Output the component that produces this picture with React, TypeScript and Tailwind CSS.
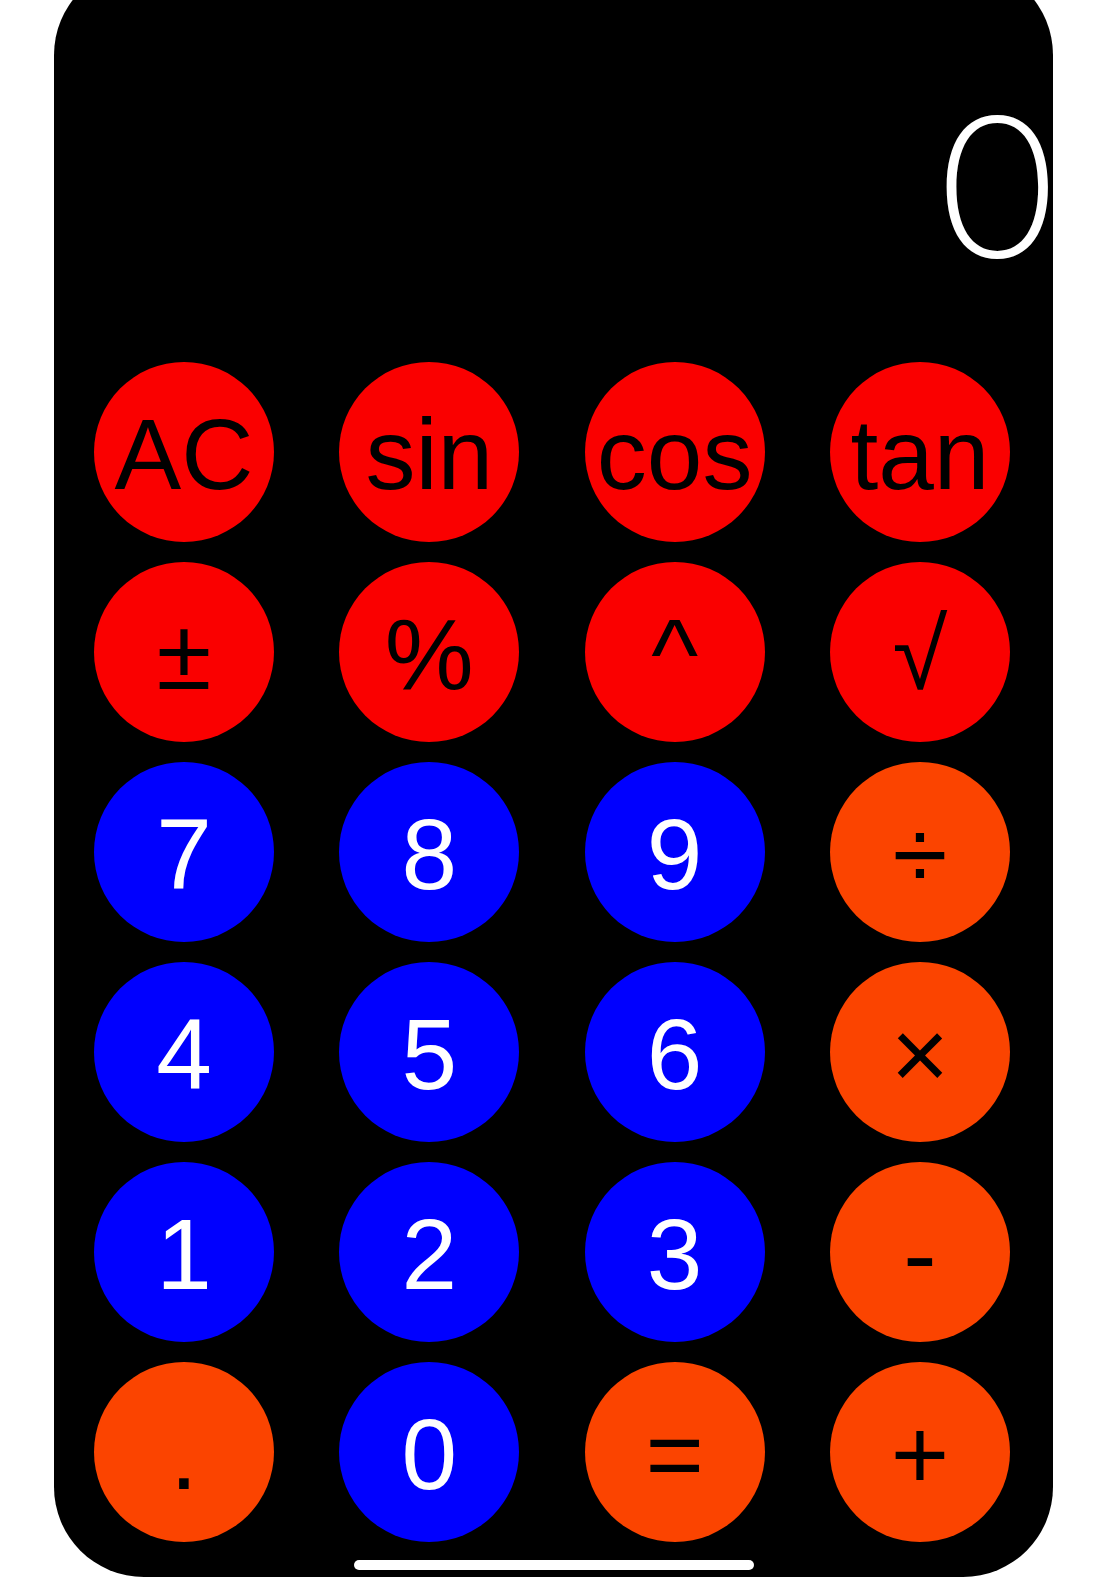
import React from 'react';

type Key = { label: string; kind: 'fn' | 'num' | 'op' };

const rows: Key[][] = [
  [
    { label: 'AC', kind: 'fn' },
    { label: 'sin', kind: 'fn' },
    { label: 'cos', kind: 'fn' },
    { label: 'tan', kind: 'fn' },
  ],
  [
    { label: '±', kind: 'fn' },
    { label: '%', kind: 'fn' },
    { label: '^', kind: 'fn' },
    { label: '√', kind: 'fn' },
  ],
  [
    { label: '7', kind: 'num' },
    { label: '8', kind: 'num' },
    { label: '9', kind: 'num' },
    { label: '÷', kind: 'op' },
  ],
  [
    { label: '4', kind: 'num' },
    { label: '5', kind: 'num' },
    { label: '6', kind: 'num' },
    { label: '×', kind: 'op' },
  ],
  [
    { label: '1', kind: 'num' },
    { label: '2', kind: 'num' },
    { label: '3', kind: 'num' },
    { label: '-', kind: 'op' },
  ],
  [
    { label: '.', kind: 'op' },
    { label: '0', kind: 'num' },
    { label: '=', kind: 'op' },
    { label: '+', kind: 'op' },
  ],
];

const kindClass = {
  fn: 'bg-[#fa0000] text-black',
  num: 'bg-[#0000ff] text-white',
  op: 'bg-[#fb4400] text-black',
};

const CalcKey = ({ k }: { k: Key }) => (
  <button
    className={`w-[180px] h-[180px] rounded-full flex items-center justify-center pt-[3px] text-[100px] leading-none ${kindClass[k.kind]}`}
    style={{ fontFamily: '"Liberation Sans", Arial, sans-serif' }}
  >
    {k.label}
  </button>
);

const App = () => {
  return (
    <div className="w-full h-[1580px] bg-white overflow-hidden">
      <div className="w-[999px] h-[1612px] ml-[54px] -mt-[35px] rounded-[90px] bg-black flex flex-col">
        {/* display */}
        <div className="h-[397px] pt-[126px] flex justify-end -mr-[10px]">
          <span
            className="text-white text-[193px] leading-none font-[150] scale-x-[1.12] origin-right"
            style={{ fontFamily: 'Inter, "Helvetica Neue", sans-serif' }}
          >
            0
          </span>
        </div>

        {/* keypad */}
        <div className="flex flex-col gap-[20px] pl-[40px] pr-[43px]">
          {rows.map((row, i) => (
            <div key={i} className="flex justify-between">
              {row.map((k) => (
                <CalcKey key={k.label} k={k} />
              ))}
            </div>
          ))}
        </div>

        <div className="mt-[18px] mx-auto w-[400px] h-[10px] rounded-full bg-white" />
      </div>
    </div>
  );
};

export default App;
